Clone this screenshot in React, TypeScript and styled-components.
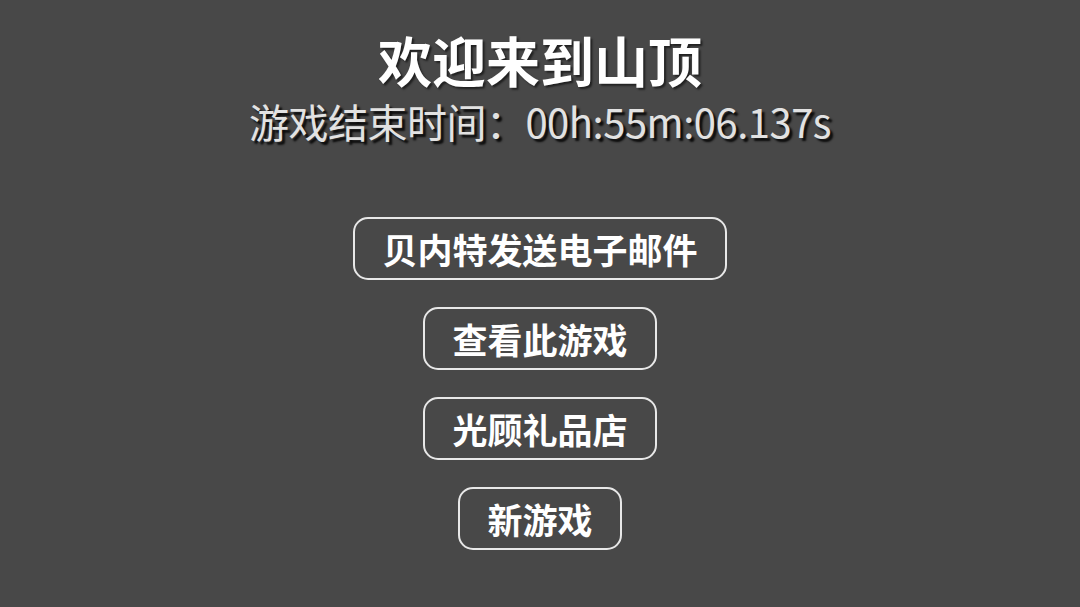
import React from "react";
import styled, { createGlobalStyle } from "styled-components";

const GlobalStyle = createGlobalStyle`
  html, body {
    margin: 0;
    padding: 0;
    background: #484848;
  }
  body {
    font-family: 'Noto Sans CJK SC', 'Noto Sans', sans-serif;
  }
`

const Screen = styled.div`
  width: 1080px;
  height: 607px;
  background: #484848;
  display: flex;
  flex-direction: column;
  align-items: center;
  padding-top: 26px;
  box-sizing: border-box;
  overflow: hidden;
`

const Title = styled.h1`
  margin: 0;
  font-family: 'Noto Sans CJK SC', sans-serif;
  font-weight: 700;
  font-size: 54px;
  line-height: 68px;
  color: #ffffff;
  text-shadow: 2px 2px 2px rgba(0, 0, 0, 0.55);
`

const Subtitle = styled.p`
  margin: 0;
  font-family: 'Noto Sans CJK SC', sans-serif;
  font-weight: 400;
  font-size: 40px;
  line-height: 54px;
  letter-spacing: -0.5px;
  color: #e2e2e2;
  text-shadow: 3px 3px 2px rgba(0, 0, 0, 0.85);
`

const ButtonList = styled.div`
  display: flex;
  flex-direction: column;
  align-items: center;
  gap: 27px;
  margin-top: 69px;
`

const MenuButton = styled.button`
  height: 63px;
  padding: 0 27px;
  box-sizing: border-box;
  border: 2.5px solid #e8e8e8;
  border-radius: 15px;
  background: transparent;
  color: #ffffff;
  font-family: 'Noto Sans CJK SC', sans-serif;
  font-weight: 700;
  font-size: 35px;
  line-height: 1;
  cursor: pointer;
`

const items = ["贝内特发送电子邮件", "查看此游戏", "光顾礼品店", "新游戏"];

const App: React.FC = () => {
  return (
    <>
      <GlobalStyle />
      <Screen>
        <Title>欢迎来到山顶</Title>
        <Subtitle>游戏结束时间：00h:55m:06.137s</Subtitle>
        <ButtonList>
          {items.map((label) => (
            <MenuButton key={label}>{label}</MenuButton>
          ))}
        </ButtonList>
      </Screen>
    </>
  );
};

export default App;
